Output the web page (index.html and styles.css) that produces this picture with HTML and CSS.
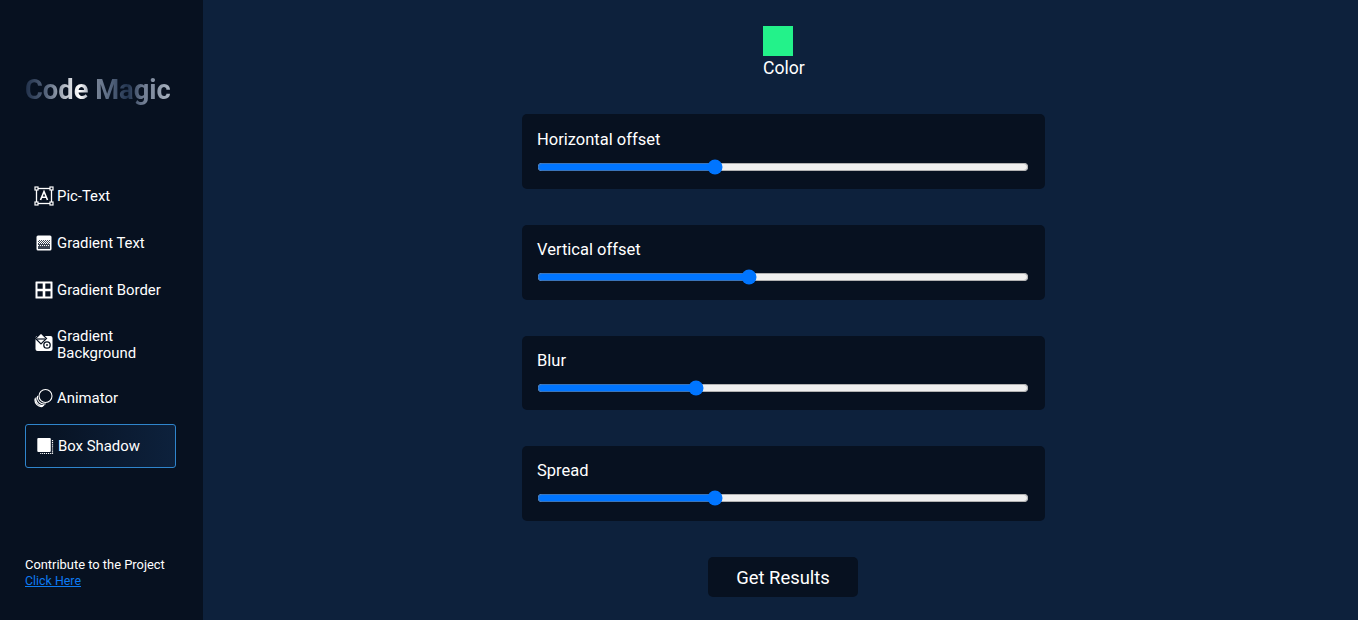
FILE: index.html
```html
<!DOCTYPE html>
<html lang="en">
  <head>
    <title>Code Magic</title>
    <meta charset="UTF-8" />
    <meta name="viewport" content="width=device-width" />
    <link rel="stylesheet" href="styles.css">
  </head>
  <body>
    <aside class="sidebar">
      <h1 class="logo">Code Magic</h1>
      <nav class="nav">
        <a class="nav-item" href="#">
          <svg class="icon" viewBox="0 0 20 20" fill="none" stroke="#fff">
            <rect x="2.500" y="2.500" width="15" height="15" stroke-width="1.300" />
            <rect x="1" y="1" width="3" height="3" fill="#071120" stroke-width="1.200" />
            <rect x="16" y="1" width="3" height="3" fill="#071120" stroke-width="1.200" />
            <rect x="1" y="16" width="3" height="3" fill="#071120" stroke-width="1.200" />
            <rect x="16" y="16" width="3" height="3" fill="#071120" stroke-width="1.200" />
            <path d="M6.500 14 10 5.500 13.500 14M7.700 11.200h4.600" stroke-width="1.600" />
          </svg>
          <span>Pic-Text</span>
        </a>
        <a class="nav-item" href="#">
          <svg class="icon" viewBox="0 0 20 20">
            <rect x="2.500" y="2.500" width="15" height="15" rx="1.500" fill="#fff" />
            <rect x="4" y="7" width="12" height="9" fill="#3d4552" />
            <path d="M4 7h1v1H4zM6 7h1v1H6zM8 7h1v1H8zM10 7h1v1h-1zM12 7h1v1h-1zM14 7h1v1h-1zM5 8h1v1H5zM7 8h1v1H7zM9 8h1v1H9zM11 8h1v1h-1zM13 8h1v1h-1zM15 8h1v1h-1zM4 9h1v1H4zM6 9h1v1H6zM8 9h1v1H8zM10 9h1v1h-1zM12 9h1v1h-1zM14 9h1v1h-1zM5 10h1v1H5zM7 10h1v1H7zM9 10h1v1H9zM11 10h1v1h-1zM13 10h1v1h-1zM15 10h1v1h-1zM4 12h1v1H4zM6 12h1v1H6zM8 12h1v1H8zM10 12h1v1h-1zM12 12h1v1h-1zM14 12h1v1h-1z" fill="#fff" />
          </svg>
          <span>Gradient Text</span>
        </a>
        <a class="nav-item" href="#">
          <svg class="icon" viewBox="0 0 20 20" fill="#fff">
            <path fill-rule="evenodd" d="M2 1.500h16a.5.5 0 0 1 .5.5v16a.5.5 0 0 1-.5.5H2a.5.5 0 0 1-.5-.5V2a.5.5 0 0 1 .5-.5ZM3.500 3.500v5.200h5.200V3.500ZM11.300 3.500v5.200h5.200V3.500ZM3.500 11.300v5.200h5.200v-5.200ZM11.300 11.300v5.200h5.200v-5.200Z" />
          </svg>
          <span>Gradient Border</span>
        </a>
        <a class="nav-item tall" href="#">
          <svg class="icon" viewBox="0 0 20 20">
            <rect x="1.500" y="4" width="17" height="15" rx="2" fill="#fff" />
            <path d="M7 1 12.500 6.500 7 12 1.500 6.500Z" fill="#fff" stroke="#071120" stroke-width="1.200" />
            <path d="M3 7h8" stroke="#071120" stroke-width="1.200" />
            <circle cx="13" cy="13" r="3.200" fill="#fff" stroke="#071120" stroke-width="1.300" />
            <circle cx="13" cy="13" r=".9" fill="#071120" />
          </svg>
          <span>Gradient Background</span>
        </a>
        <a class="nav-item" href="#">
          <svg class="icon" viewBox="0 0 20 20" fill="none" stroke="#fff" stroke-width="1.100">
            <circle cx="11.500" cy="8" r="6.500" />
            <path d="M3.700 7.800A6.500 6.500 0 0 0 11.700 15.800M2.200 9.300A6.500 6.500 0 0 0 10.200 17.300M1.200 10.300A6.500 6.500 0 0 0 9.200 18.300" />
          </svg>
          <span>Animator</span>
        </a>
        <a class="nav-item active" href="#">
          <svg class="icon" viewBox="0 0 20 20">
            <rect x="2.300" y="2" width="13.500" height="14" rx="1" fill="#fff" />
            <path d="M17.500 4v13.500H5" fill="none" stroke="#fff" stroke-width="1.200" stroke-dasharray="1.200 .9" />
          </svg>
          <span>Box Shadow</span>
        </a>
      </nav>
      <div class="contribute">
        <p>Contribute to the Project</p>
        <a href="#">Click Here</a>
      </div>
    </aside>
    <main class="main">
      <div class="color-field">
        <div class="swatch"></div>
        <label>Color</label>
      </div>
      <div class="panel">
        <label for="horizontal">Horizontal offset</label>
        <input type="range" id="horizontal" min="0" max="100" step="0.1" value="35.7" />
      </div>
      <div class="panel">
        <label for="vertical">Vertical offset</label>
        <input type="range" id="vertical" min="0" max="100" step="0.1" value="42.9" />
      </div>
      <div class="panel">
        <label for="blur">Blur</label>
        <input type="range" id="blur" min="0" max="100" step="0.1" value="31.7" />
      </div>
      <div class="panel">
        <label for="spread">Spread</label>
        <input type="range" id="spread" min="0" max="100" step="0.1" value="35.7" />
      </div>
      <button class="results">Get Results</button>
    </main>
  </body>
</html>
```
FILE: styles.css
```css
/* Reset */
* {
  margin: 0;
  padding: 0;
  box-sizing: border-box;
  font-family: Roboto, "Noto Sans", sans-serif;
}

body {
  display: flex;
  height: 620px;
  overflow: hidden;
  background-color: #0d213c;
  color: #fff;
}

/* Sidebar */
.sidebar {
  width: 203px;
  flex-shrink: 0;
  display: flex;
  flex-direction: column;
  padding: 0 27px 31px 25px;
  background-color: #071120;
}

.logo {
  margin-top: 74px;
  font-size: 27.3px;
  line-height: 32px;
  font-weight: 700;
  white-space: nowrap;
  color: transparent;
  background: linear-gradient(90deg, #1f2f49 0%, #56657c 14%, #ffffff 36%, #7f8a9b 45%, #5c6c84 55%, #22344f 68%, #6d7a90 78%, #b5bfca 100%);
  -webkit-background-clip: text;
  background-clip: text;
}

.nav {
  margin-top: 68px;
  display: flex;
  flex-direction: column;
  gap: 3px;
}

.nav-item {
  display: flex;
  align-items: center;
  gap: 3px;
  min-height: 44px;
  padding: 11px 8px;
  border: 1px solid transparent;
  border-radius: 3px;
  font-size: 14.9px;
  line-height: 17px;
  color: #fff;
  text-decoration: none;
}

.nav-item.tall {
  padding: 12px 8px 10px;
}

.nav-item.tall .icon {
  margin-bottom: 6px;
}

.nav-item.active {
  margin-top: 1px;
  padding-left: 9px;
  border-color: #2f85cc;
  background: linear-gradient(90deg, #071120, #0d213c);
}

.icon {
  width: 20px;
  height: 20px;
  flex-shrink: 0;
}

.contribute {
  margin-top: auto;
  font-size: 12.9px;
  line-height: 16px;
}

.contribute a {
  font-size: 12.4px;
  color: #0d7bf2;
}

/* Main */
.main {
  flex: 1;
  display: flex;
  flex-direction: column;
  align-items: center;
  padding: 26px 0 0 6px;
}

.color-field {
  width: 41px;
  margin-bottom: 34.4px;
  font-size: 17.6px;
  line-height: 24px;
}

.swatch {
  width: 30px;
  height: 30px;
  background-color: #23f28a;
}

.panel {
  width: 523px;
  height: 74.6px;
  margin-bottom: 36px;
  padding: 14.2px 15px 0;
  border-radius: 5px;
  background-color: #071120;
  font-size: 16.5px;
  line-height: 21px;
}

.panel label {
  display: block;
}

.panel input {
  display: block;
  width: 492px;
  height: 16px;
  margin: 9px 0 0;
}

.results {
  width: 150px;
  height: 40px;
  margin-right: 1px;
  padding-top: 2px;
  border: none;
  border-radius: 5px;
  background-color: #071120;
  color: #fff;
  font-size: 18.4px;
}
```
